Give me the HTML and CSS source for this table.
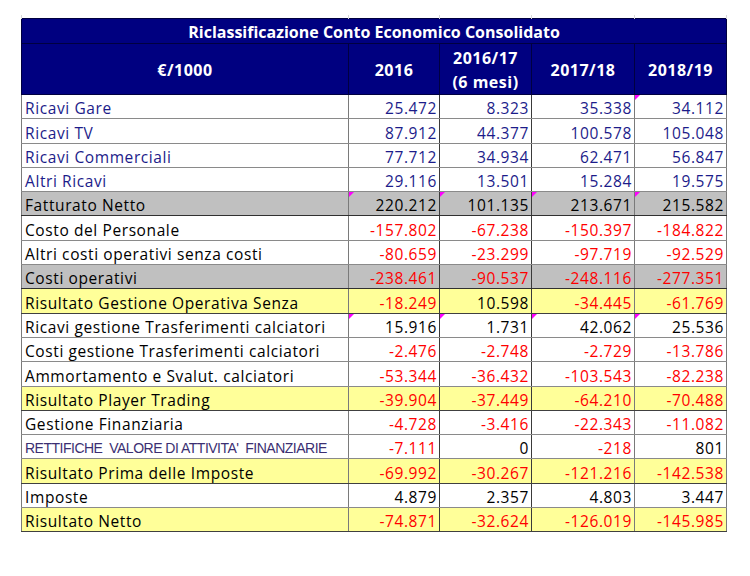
FILE: index.html
```html
<!DOCTYPE html>
<html lang="it">
<head>
<meta charset="utf-8">
<title>Riclassificazione Conto Economico Consolidato</title>
<link rel="stylesheet" href="styles.css">
</head>
<body>
<table class="ce">
  <colgroup>
    <col class="w-label"><col class="w-a"><col class="w-b"><col class="w-c"><col class="w-d">
  </colgroup>
  <thead>
    <tr class="grid"><td></td><td></td><td></td><td></td><td></td></tr>
    <tr class="title"><th colspan="5">Riclassificazione Conto Economico Consolidato</th></tr>
    <tr class="head">
      <th>€/1000</th><th>2016</th><th>2016/17<br>(6 mesi)</th><th>2017/18</th><th>2018/19</th>
    </tr>
  </thead>
  <tbody>
    <tr class="blue"><td>Ricavi Gare</td><td>25.472</td><td>8.323</td><td>35.338</td><td class="c">34.112</td></tr>
    <tr class="blue"><td>Ricavi TV</td><td>87.912</td><td>44.377</td><td>100.578</td><td>105.048</td></tr>
    <tr class="blue"><td>Ricavi Commerciali</td><td>77.712</td><td>34.934</td><td>62.471</td><td>56.847</td></tr>
    <tr class="blue"><td>Altri Ricavi</td><td>29.116</td><td>13.501</td><td>15.284</td><td>19.575</td></tr>
    <tr class="grey"><td>Fatturato Netto</td><td class="c">220.212</td><td class="c">101.135</td><td class="c">213.671</td><td class="c">215.582</td></tr>
    <tr><td>Costo del Personale</td><td class="neg">-157.802</td><td class="neg">-67.238</td><td class="neg">-150.397</td><td class="neg">-184.822</td></tr>
    <tr><td>Altri costi operativi senza costi</td><td class="neg">-80.659</td><td class="neg">-23.299</td><td class="neg">-97.719</td><td class="neg">-92.529</td></tr>
    <tr class="grey"><td>Costi operativi</td><td class="neg">-238.461</td><td class="neg">-90.537</td><td class="neg">-248.116</td><td class="neg">-277.351</td></tr>
    <tr class="yellow"><td>Risultato Gestione Operativa Senza</td><td class="neg">-18.249</td><td>10.598</td><td class="neg">-34.445</td><td class="neg">-61.769</td></tr>
    <tr><td>Ricavi gestione Trasferimenti calciatori</td><td class="c">15.916</td><td class="c">1.731</td><td class="c">42.062</td><td class="c">25.536</td></tr>
    <tr><td>Costi gestione Trasferimenti calciatori</td><td class="neg">-2.476</td><td class="neg">-2.748</td><td class="neg">-2.729</td><td class="neg">-13.786</td></tr>
    <tr><td>Ammortamento e Svalut. calciatori</td><td class="neg">-53.344</td><td class="neg">-36.432</td><td class="neg">-103.543</td><td class="neg">-82.238</td></tr>
    <tr class="yellow"><td>Risultato Player Trading</td><td class="neg">-39.904</td><td class="neg">-37.449</td><td class="neg">-64.210</td><td class="neg">-70.488</td></tr>
    <tr><td>Gestione Finanziaria</td><td class="neg">-4.728</td><td class="neg">-3.416</td><td class="neg">-22.343</td><td class="neg">-11.082</td></tr>
    <tr><td class="narrow">RETTIFICHE&nbsp; VALORE DI ATTIVITA'&nbsp; FINANZIARIE</td><td class="neg">-7.111</td><td>0</td><td class="neg">-218</td><td>801</td></tr>
    <tr class="yellow"><td>Risultato Prima delle Imposte</td><td class="neg">-69.992</td><td class="neg">-30.267</td><td class="neg">-121.216</td><td class="neg">-142.538</td></tr>
    <tr><td>Imposte</td><td>4.879</td><td>2.357</td><td>4.803</td><td>3.447</td></tr>
    <tr class="yellow"><td>Risultato Netto</td><td class="neg">-74.871</td><td class="neg">-32.624</td><td class="neg">-126.019</td><td class="neg">-145.985</td></tr>
  </tbody>
</table>
</body>
</html>
```
FILE: styles.css
```css
html, body {
  margin: 0;
  padding: 0;
  background: #ffffff;
}
body {
  padding: 15px 0 0 21px;
  font-family: "Open Sans", "Noto Sans", sans-serif;
}
.ce {
  border-collapse: collapse;
  table-layout: fixed;
  width: 705px;
  font-size: 15.5px;
  font-weight: 500;
  letter-spacing: 0.6px;
  color: #000000;
}
.w-label { width: 327px; }
.w-a { width: 91px; }
.w-b { width: 92px; }
.w-c { width: 103px; }
.w-d { width: 92px; }

.grid td {
  height: 3px;
  padding: 0;
  border-left: 1px solid #d9d9d9;
  border-right: 1px solid #d9d9d9;
}

.title th {
  height: 23px;
  padding: 1px 0 0 0;
  background: #000080;
  color: #ffffff;
  font-weight: bold;
  font-size: 16px;
  letter-spacing: 0;
  line-height: 20px;
  text-align: center;
  border: 1px solid #000040;
}
.head th {
  height: 44px;
  padding: 2px 0 0 0;
  background: #000080;
  color: #ffffff;
  font-weight: bold;
  font-size: 16px;
  letter-spacing: 0.5px;
  line-height: 24px;
  text-align: center;
  border: 1px solid #000040;
}

tbody td {
  height: 23.3px;
  padding: 0 2px 0 4px;
  text-align: right;
  white-space: nowrap;
  position: relative;
  border-top: 1px solid #8a8a8a;
  border-bottom: 1px solid #8a8a8a;
  border-left: 1px solid #7a7a7a;
  border-right: 1px solid #7a7a7a;
  vertical-align: bottom;
  line-height: 20px;
}
tbody td:first-child {
  text-align: left;
  padding-left: 3px;
}
tbody td:nth-child(2),
tbody td:nth-child(3) {
  border-right-color: #3a3a3a;
}
tbody td:nth-child(3),
tbody td:nth-child(4) {
  border-left-color: #3a3a3a;
}

.blue td { color: #1c1c8a; }
.grey td {
  background: #c0c0c0;
  border-top-color: #303030;
  border-bottom-color: #303030;
}
.yellow td {
  background: #ffff99;
  border-top-color: #404040;
  border-bottom-color: #404040;
}
tbody td.neg { color: #ff0000; }

tbody td.narrow {
  font-family: "Liberation Sans Narrow", "Liberation Sans", sans-serif;
  font-size: 14px;
  font-weight: normal;
  color: #3b2f72;
  letter-spacing: -0.5px;
}

.c::before {
  content: "";
  position: absolute;
  top: 0;
  left: 0;
  width: 0;
  height: 0;
  border-top: 5px solid #ff00ff;
  border-right: 5px solid transparent;
}
```
